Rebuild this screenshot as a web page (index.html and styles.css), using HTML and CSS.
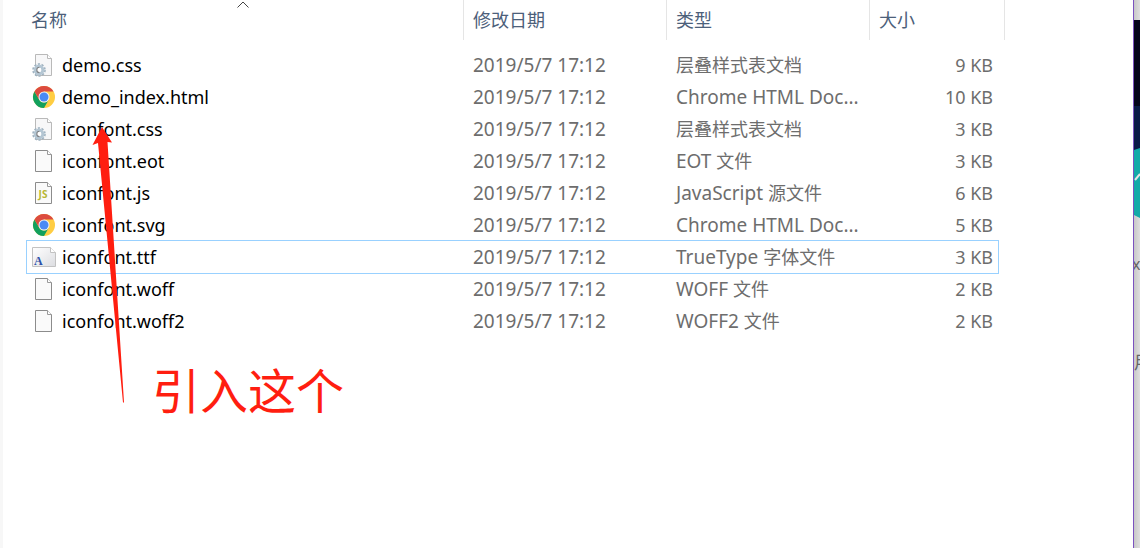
FILE: index.html
```
<!DOCTYPE html>
<html lang="zh-CN">
<head>
<meta charset="utf-8">
<title>iconfont</title>
<link rel="stylesheet" href="styles.css">
</head>
<body>
<svg class="defs" aria-hidden="true">
  <symbol id="page" viewBox="0 0 24 24">
    <path d="M3.500 1.500h12l4 4v17h-16z" fill="#fafafa" stroke="#8c8c8c"/>
    <path d="M15.500 1.500v4h4" fill="#fff" stroke="#9a9a9a"/>
  </symbol>
  <symbol id="css" viewBox="0 0 24 24">
    <path d="M3.500 1.500h12l4 4v17h-16z" fill="#f7f7f8" stroke="#b9b9b9"/>
    <path d="M15.500 1.500v4h4" fill="#fff" stroke="#b9b9b9"/>
    <circle cx="7" cy="17" r="6" fill="none" stroke="#9fb2c0" stroke-width="1.600" stroke-dasharray="2.200 1.570"/>
    <circle cx="7" cy="17" r="3.900" fill="#fff" stroke="#b4c6d3" stroke-width="3"/>
    <path d="M7.500 14.200a2.600 2.600 0 0 0 0 5.400" fill="none" stroke="#7d7f82" stroke-width="1.100"/>
  </symbol>
  <symbol id="chrome" viewBox="0 0 24 24">
    <circle cx="12" cy="12" r="11" fill="#ffcd42"/>
    <path d="M2.470 6.500 7.240 14.750A5.500 5.500 0 0 0 16.760 14.750L12 23A11 11 0 0 1 2.470 6.500z" fill="#12a05d"/>
    <path d="M12 12 7.240 14.750 2.470 6.500A11 11 0 0 1 21.530 6.500H12z" fill="#dc4b3f"/>
    <circle cx="12" cy="12" r="5.500" fill="#f3f3f3"/>
    <circle cx="12" cy="12" r="4.500" fill="#4a8af4"/>
  </symbol>
</svg>
<div class="screen">
  <main class="window">
    <table class="files">
      <colgroup><col class="col-name"><col class="col-date"><col class="col-type"><col class="col-size"></colgroup>
      <thead>
        <tr>
          <th scope="col" aria-sort="ascending">名称<svg class="sort" viewBox="0 0 12 8" aria-hidden="true"><path d="M.5 7.500 6 2l5.500 5.500" fill="none" stroke="#444"/></svg></th>
          <th scope="col">修改日期</th>
          <th scope="col">类型</th>
          <th scope="col">大小</th>
        </tr>
      </thead>
      <tbody>
        <tr><td><div class="name"><svg class="icon" aria-hidden="true"><use href="#css"/></svg>demo.css</div></td><td>2019/5/7 17:12</td><td><span class="han">层叠样式表文档</span></td><td>9 KB</td></tr>
        <tr><td><div class="name"><svg class="icon" aria-hidden="true"><use href="#chrome"/></svg>demo_index.html</div></td><td>2019/5/7 17:12</td><td>Chrome HTML Doc...</td><td>10 KB</td></tr>
        <tr><td><div class="name"><svg class="icon" aria-hidden="true"><use href="#css"/></svg>iconfont.css</div></td><td>2019/5/7 17:12</td><td><span class="han">层叠样式表文档</span></td><td>3 KB</td></tr>
        <tr><td><div class="name"><svg class="icon" aria-hidden="true"><use href="#page"/></svg>iconfont.eot</div></td><td>2019/5/7 17:12</td><td>EOT <span class="han">文件</span></td><td>3 KB</td></tr>
        <tr><td><div class="name"><svg class="icon" viewBox="0 0 24 24" aria-hidden="true"><use href="#page"/><text x="11" y="17" class="js-label">JS</text></svg>iconfont.js</div></td><td>2019/5/7 17:12</td><td>JavaScript <span class="han">源文件</span></td><td>6 KB</td></tr>
        <tr><td><div class="name"><svg class="icon" aria-hidden="true"><use href="#chrome"/></svg>iconfont.svg</div></td><td>2019/5/7 17:12</td><td>Chrome HTML Doc...</td><td>5 KB</td></tr>
        <tr class="focused"><td><div class="name"><svg class="icon" viewBox="0 0 24 24" aria-hidden="true">
          <linearGradient id="sheet" x2="1" y2="1"><stop offset="0" stop-color="#fff"/><stop offset="1" stop-color="#dcdde1"/></linearGradient>
          <path d="M.5 2.500h18l5 5v14H.5z" fill="url(#sheet)" stroke="#c2c2c2"/>
          <path d="M18.500 2.500v5h5" fill="#fff" stroke="#c2c2c2"/>
          <text x="2" y="20" class="ttf-label">A</text>
        </svg>iconfont.ttf</div></td><td>2019/5/7 17:12</td><td>TrueType <span class="han">字体文件</span></td><td>3 KB</td></tr>
        <tr><td><div class="name"><svg class="icon" aria-hidden="true"><use href="#page"/></svg>iconfont.woff</div></td><td>2019/5/7 17:12</td><td>WOFF <span class="han">文件</span></td><td>2 KB</td></tr>
        <tr><td><div class="name"><svg class="icon" aria-hidden="true"><use href="#page"/></svg>iconfont.woff2</div></td><td>2019/5/7 17:12</td><td>WOFF2 <span class="han">文件</span></td><td>2 KB</td></tr>
      </tbody>
    </table>
    <svg class="arrow" viewBox="0 0 34 276" aria-hidden="true"><path d="M13 0 23 15.500 18.500 15 35 275.500H34L9 16 3.500 18z" fill="#ff1e10"/></svg>
    <p class="note">引入这个</p>
  </main>
  <aside class="behind">
    <div class="banner">
      <svg class="badge" viewBox="0 0 6 70" aria-hidden="true"><path d="M0 2 6 0v70L0 67z" fill="#13aaa8"/><path d="M1 32 6 26" stroke="#e4e4e4" stroke-width="2"/></svg>
    </div>
    <p class="peek-latin">x</p>
    <p class="peek-han">用</p>
  </aside>
</div>
</body>
</html>
```
FILE: styles.css
```
* { box-sizing: border-box; }
body {
  margin: 0;
  font: 19px/32px "Noto Sans", "Noto Sans CJK SC", sans-serif;
  color: #6d6d6d;
  background: #fff;
}
.defs { position: absolute; width: 0; height: 0; }
.screen { display: flex; min-height: 100vh; }
.window {
  position: relative;
  flex: 1;
  min-width: 0;
  padding-left: 24px;
  border-left: 3px solid #f7f7f7;
}
.files { table-layout: fixed; width: 971px; border-spacing: 0; }
.col-name { width: 437px; }
.col-date, .col-type { width: 203px; }
.files th {
  position: relative;
  height: 40px;
  padding: 0 0 0 9px;
  border-right: 1px solid #e5e5e5;
  font-size: 18px;
  font-weight: 400;
  text-align: left;
  color: #4c607a;
}
.files th:first-child { padding-left: 4px; }
.files th:last-child { border-right: 0; }
.files th:last-child::after {
  content: "";
  position: absolute;
  top: 0;
  right: -7px;
  height: 40px;
  border-right: 1px solid #e5e5e5;
}
.sort { position: absolute; top: 0; left: 50%; margin-left: -8px; width: 12px; height: 8px; }
.files tbody::before { content: ""; display: block; height: 9px; }
.files td { height: 32px; padding: 0 0 0 9px; line-height: 30px; white-space: nowrap; }
.files td:first-child { padding-left: 5px; font-size: 18px; color: #000; }
.files td:last-child { padding-right: 5px; font-size: 18px; text-align: right; }
.name { display: flex; align-items: center; gap: 6px; }
.han { font-size: 18px; }
.icon { width: 24px; height: 24px; }
.focused { outline: 1px solid #99d1ff; }
.js-label { font: 700 10px "Noto Sans", sans-serif; fill: #b7b733; text-anchor: middle; }
.ttf-label { font: 700 12px "Liberation Serif", serif; fill: #2b50a8; }
.arrow { position: absolute; top: 127px; left: 86px; width: 34px; height: 276px; overflow: visible; }
.note {
  margin: 0;
  padding: 22px 0 0 125px;
  font-size: 48px;
  line-height: 64px;
  color: #ff1e10;
}
.behind {
  width: 7px;
  padding-top: 20px;
  overflow: hidden;
  border-left: 1px solid #7b52c0;
  background: linear-gradient(90deg, #c8c8c8, #dedede);
}
.banner { height: 198px; padding-top: 128px; background: linear-gradient(#04041c 86px, #0a1a48 86px 130px, transparent 130px); }
.badge { display: block; width: 6px; height: 70px; }
.behind p { margin: 0; color: #666; }
.behind .peek-latin { padding-top: 30px; margin-left: -2px; font-size: 16px; }
.behind .peek-han { padding-top: 66px; font-size: 18px; }
```
